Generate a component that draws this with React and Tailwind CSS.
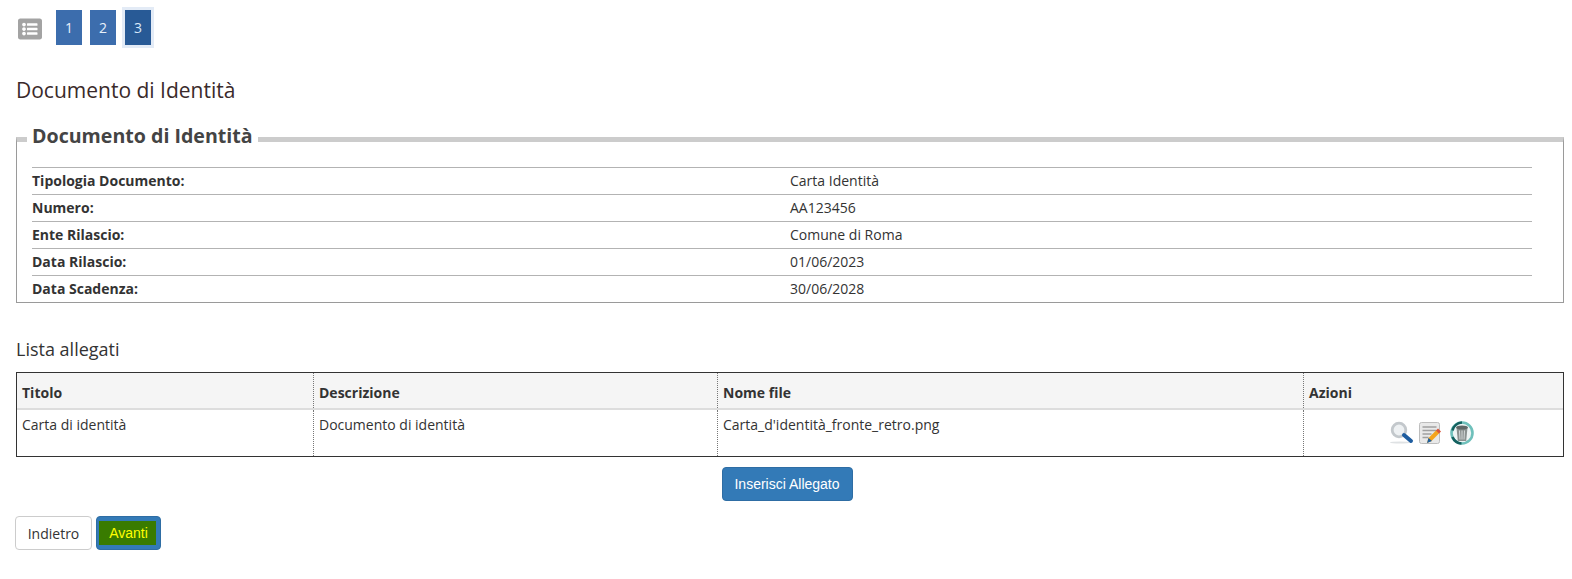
import React from 'react';
import { FaListAlt } from 'react-icons/fa';

const rows = [
  ['Tipologia Documento:', 'Carta Identità'],
  ['Numero:', 'AA123456'],
  ['Ente Rilascio:', 'Comune di Roma'],
  ['Data Rilascio:', '01/06/2023'],
  ['Data Scadenza:', '30/06/2028'],
];

const Magnifier = () => (
  <svg width="24" height="24" viewBox="0 0 24 24">
    <ellipse cx="10" cy="21.5" rx="10" ry="1" fill="#dfe2e4" />
    <circle cx="9" cy="9" r="6.8" fill="#eef1f3" stroke="#c3c8cc" strokeWidth="2.800" />
    <path d="M14 14l7 6" stroke="#1f5da0" strokeWidth="4" strokeLinecap="round" />
  </svg>
);

const Edit = () => (
  <svg width="24" height="24" viewBox="0 0 24 24">
    <rect x="1.500" y="1.500" width="20" height="21" rx="2" fill="#e9e9e9" stroke="#bdbdbd" />
    <path d="M4.500 6h14M4.500 9.500h14M4.500 13h9M4.500 16.500h6" stroke="#a0a0a0" strokeWidth="1.300" />
    <path d="M9 22l1.500-5 8-8 3 3-8 8z" fill="#f4a41c" />
    <path d="M18 9.500l2-2 3 3-2 2z" fill="#d9553a" />
    <path d="M9 22l1.500-5 3.500 3z" fill="#1d5f9e" />
  </svg>
);

const Trash = () => (
  <svg width="24" height="24" viewBox="0 0 24 24">
    <circle cx="12" cy="12" r="10.500" fill="#eef4f4" stroke="#6fc0bb" strokeWidth="2.600" />
    <path d="M2.500 16a10.500 10.500 0 0 0 9 6.500M12 1.500a10.500 10.500 0 0 0-9.500 8" fill="none" stroke="#14605f" strokeWidth="2.600" />
    <path d="M6.500 6.500h11l-1.300 13.500h-8.400z" fill="#8b9190" />
    <ellipse cx="12" cy="6.500" rx="6" ry="2" fill="#5f6665" />
    <path d="M9.500 9.500l.5 9M12 9.500v9M14.500 9.500l-.5 9" stroke="#d5d9d9" strokeWidth="1" />
  </svg>
);

const Step = ({ n, active }) => (
  <div className={active ? 'border-[3px] border-[#e3ebf6]' : ''}>
    <div className={`w-[26px] h-[35px] flex items-center justify-center text-[14px] ${active ? 'bg-[#285a96] text-[#d6e8fa]' : 'bg-[#3c6dad] text-[#e8f0fa]'}`}>{n}</div>
  </div>
);

const App = () => {
  return (
    <div className="w-[1572px] h-[579px] bg-white overflow-hidden text-[#333333] font-['Open_Sans',sans-serif] text-[14px] pt-[10px]">
      <div className="flex items-center pl-[18px] gap-2 h-[35px]">
        <div className="w-[24px] mr-[6px] mt-[3px] flex items-center justify-center text-[#a3a3a3]">
          <FaListAlt size={24} />
        </div>
        <Step n="1" />
        <Step n="2" />
        <div className="-ml-[2px]"><Step n="3" active /></div>
      </div>

      <h2 className="ml-[16px] mt-[32px] text-[21px] leading-[27px] text-[#3a2a2a]">Documento di Identità</h2>

      <fieldset className="ml-[16px] w-[1548px] mt-[18px] h-[181px] border-x border-b border-x-[#9a9a9a] border-b-[#9a9a9a] border-t-[5px] border-t-[#cccccc] px-[15px] min-w-0">
        <legend className="-ml-[5px] px-[5px] pb-[8px] text-[19.600px] leading-[27px] font-bold text-[#444444]">Documento di Identità</legend>
        <div className="mt-[10px] w-[1500px]">
          {rows.map(([label, value]) => (
            <div key={label} className="flex h-[27px] items-center pb-[2px] border-t border-[#b3b3b3]">
              <div className="w-[758px] font-bold">{label}</div>
              <div>{value}</div>
            </div>
          ))}
        </div>
      </fieldset>

      <h3 className="ml-[16px] mt-[34px] text-[18px] leading-[24px] text-[#333333]">Lista allegati</h3>

      <div className="ml-[16px] mt-[11px] w-[1548px] border border-[#333333]">
        <div className="flex h-[37px] items-center bg-[#f5f5f5] border-b-2 border-[#dddddd] font-bold">
          <div className="w-[297px] h-full pl-[5px] pt-[4px] flex items-center border-r border-dotted border-[#777777]">Titolo</div>
          <div className="w-[404px] h-full pl-[5px] pt-[4px] flex items-center border-r border-dotted border-[#777777]">Descrizione</div>
          <div className="w-[586px] h-full pl-[5px] pt-[4px] flex items-center border-r border-dotted border-[#777777]">Nome file</div>
          <div className="flex-1 pl-[5px] pt-[4px]">Azioni</div>
        </div>
        <div className="flex h-[46px]">
          <div className="w-[297px] pl-[5px] pt-[4px] border-r border-dotted border-[#777777]">Carta di identità</div>
          <div className="w-[404px] pl-[5px] pt-[4px] border-r border-dotted border-[#777777]">Documento di identità</div>
          <div className="w-[586px] pl-[5px] pt-[4px] border-r border-dotted border-[#777777]">Carta_d'identità_fronte_retro.png</div>
          <div className="flex-1 flex items-start justify-center pt-[11px] pr-[4px]">
            <Magnifier />
            <div className="ml-[4px] mr-[8px]"><Edit /></div>
            <Trash />
          </div>
        </div>
      </div>

      <div className="flex justify-center mt-[10px] pl-[2px]">
        <button className="w-[131px] h-[34px] rounded-[4px] bg-[#337ab7] border border-[#2e6da4] text-white text-[14px] font-['Liberation_Sans',sans-serif]">Inserisci Allegato</button>
      </div>

      <div className="flex ml-[15px] mt-[15px] gap-[4px]">
        <button className="w-[77px] h-[34px] rounded-[4px] bg-white border border-[#cccccc] text-[#333333] text-[14px]">Indietro</button>
        <button className="w-[65px] h-[34px] rounded-[4px] bg-[#337ab7] border border-[#2e6da4] flex items-center justify-center pr-[2px]">
          <span className="bg-[#397b00] text-[#ffff00] w-[57px] h-[24px] pl-[2px] flex items-center justify-center text-[14px] font-['Liberation_Sans',sans-serif]">Avanti</span>
        </button>
      </div>
    </div>
  );
};

export default App;
